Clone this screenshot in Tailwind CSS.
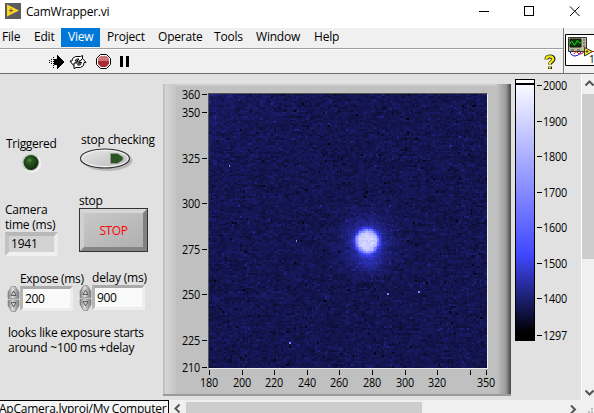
<!DOCTYPE html>
<html lang="en">
<head>
    <meta charset="UTF-8">
    <meta name="viewport" content="width=device-width, initial-scale=1.0">
    <title>CamWrapper.vi</title>
    <script src="https://cdn.jsdelivr.net/npm/@tailwindcss/browser@4"></script>
</head>
<body class="w-[594px] h-[413px] overflow-hidden flex flex-col bg-[#e1e1e1] text-black text-[12px] leading-[15px] tracking-[-0.2px] font-['Open_Sans',sans-serif] whitespace-nowrap">
    <!-- Title bar -->
    <header class="h-7 shrink-0 bg-white flex items-start">
        <svg class="ml-[5px] mt-[3px]" width="16" height="16" viewBox="0 0 16 16">
            <rect width="16" height="16" fill="#5b5e61"/>
            <path d="M2 1.5 14 7.5 2 13.5z" fill="#ffd51e"/>
            <path d="M4 7.5h4M6 5.5v4" stroke="#5b5e61" stroke-width="1"/>
        </svg>
        <span class="ml-[5px] mt-1 tracking-[-0.25px]">CamWrapper.vi</span>
        <svg class="ml-auto mr-[13px] mt-[5px]" width="103" height="12" viewBox="0 0 103 12" fill="none" stroke="#000">
            <path d="M1 6.5h10M46.500 1.500h9v9h-9z" shape-rendering="crispEdges"/>
            <path d="M92 1.500 101.500 11M101.500 1.500 92 11"/>
        </svg>
    </header>

    <div class="h-[46px] shrink-0 flex bg-[#f0f0f0] border-b border-[#6d6d6d]">
        <div class="w-[563px]">
            <nav class="h-[21px] flex border-b border-[#a0a0a0] leading-[18px]">
                <span class="w-[28px] pl-[2px]">File</span>
                <span class="w-[33px] pl-[6px]">Edit</span>
                <span class="w-[39px] h-[19px] pl-[7px] bg-[#0078d7] text-white">View</span>
                <span class="w-[51px] pl-[7px]">Project</span>
                <span class="w-[56px] pl-[7px]">Operate</span>
                <span class="w-[42px] pl-[7px]">Tools</span>
                <span class="w-[58px] pl-[7px]">Window</span>
                <span class="pl-[7px]">Help</span>
            </nav>
            <!-- Run controls -->
            <div class="h-6 flex items-center border-t border-white pl-[48px]">
                <svg width="84" height="18" viewBox="48 53 84 18">
                    <g shape-rendering="crispEdges">
                        <path d="M49.500 60v4M51.500 59v6M53.500 57v11" stroke="#000" stroke-dasharray="1 1"/>
                        <path d="M54 59h3v-4l7 7-7 7v-4h-3z" fill="#000"/>
                    </g>
                    <g fill="#fff" stroke="#000" stroke-width="1" stroke-linejoin="round">
                        <path d="M72 61 72.500 58.500 75.500 56.500H80.500L82.500 55.500V61H77L79 59H76.500L75 61H77.500L73.500 65.500 70 61z"/>
                        <path d="M84 62.500 83.500 65.500 80.500 67.500H76L74 68.500V63H79.500L77.500 65H80L81.500 62.500H79L82.500 58.500 86 62.500z"/>
                    </g>
                    <path d="M100.500 54.500h6l4 4v6l-4 4h-6l-4-4v-6z" fill="#fff" stroke="#000"/>
                    <path d="M101 56h5l3 3v5l-3 3h-5l-3-3v-5z" fill="#a82c32"/>
                    <path d="M101 56h5l3 3v2h-11v-2z" fill="#d07478"/>
                    <path d="M120 56h3v11h-3zM126 56h3v11h-3z" fill="#000" shape-rendering="crispEdges"/>
                </svg>
                <svg class="ml-auto mr-[7px]" width="12" height="16" viewBox="0 0 12 16" fill="none">
                    <path d="M2.500 5.500C2.500 1.500 9.500 1.500 9.500 5C9.500 7.500 6 7.500 6 10.500M6 12.500V15" stroke="#222" stroke-width="4"/>
                    <path d="M2.300 5.500C2.300 1.500 9.200 1.500 9.200 5C9.200 7.500 5.700 7.500 5.700 10.500M5.700 12.500V14.500" stroke="#f5e800" stroke-width="2.200"/>
                </svg>
            </div>
        </div>
        <div class="flex-1 border-l border-[#7a7a7a] pl-px pt-[6px]">
            <svg width="29" height="32" viewBox="0 0 29 32">
                <path d="M29 .5H.5v31H29" fill="#fff" stroke="#000"/>
                <path d="M3.500 3.500h18v14h-18z" fill="#bdbb9c" stroke="#333"/>
                <path d="M5 5h11v8H5z" fill="#063806" stroke="#111"/>
                <path d="M5 10q1.500-5 3-1t3 0 2-2 3 2" fill="none" stroke="#19e219"/>
                <path d="M18 6h2M18 9h2M18 12h2M6 16h3M12 16h3" stroke="#444"/>
                <path d="M5 17q1 5 5 5t6-4" fill="none" stroke="#1010c8"/>
                <path d="M9 20q2-4 4-1t7-2M26 17.500h3" fill="none" stroke="#e01010"/>
                <path d="M19.500 13.500 27.500 17.500 19.500 22z" fill="#f7ea1c" stroke="#333"/>
                <path d="M20.500 17.500h3M22 16v3" stroke="#333" stroke-width=".8"/>
                <text x="24" y="29" font-size="10">1</text>
            </svg>
        </div>
    </div>

    <!-- Front panel -->
    <main class="h-[326px] shrink-0 flex">
        <section class="w-[163px] pl-[5px] pt-[59px]">
            <div class="flex">
                <div class="w-[74px] pl-px pt-[3px]">
                    <span class="tracking-[-0.3px]">Triggered</span>
                    <svg class="ml-[14px] mt-px" width="22" height="22" viewBox="0 0 22 22">
                        <defs>
                            <radialGradient id="led" cx=".4" cy=".35" r=".65">
                                <stop offset="0" stop-color="#5a8a50"/>
                                <stop offset=".3" stop-color="#28571e"/>
                                <stop offset="1" stop-color="#0f2c0b"/>
                            </radialGradient>
                        </defs>
                        <circle cx="11.500" cy="11.500" r="9.500" fill="#f4f4f4"/>
                        <circle cx="10.500" cy="10.500" r="9" fill="#cdcdcd"/>
                        <circle cx="11" cy="10.500" r="7.500" fill="url(#led)"/>
                    </svg>
                </div>
                <div class="pl-[2px] -mt-px">
                    stop checking
                    <svg class="-ml-[2px]" width="56" height="26" viewBox="0 0 56 26">
                        <defs>
                            <linearGradient id="oval" x1="0" y1="0" x2="1" y2="1">
                                <stop offset="0" stop-color="#e9e9e9"/>
                                <stop offset="1" stop-color="#b9b9b9"/>
                            </linearGradient>
                        </defs>
                        <ellipse cx="28.500" cy="13.500" rx="25" ry="10.500" fill="#b9b9b9"/>
                        <ellipse cx="26" cy="11.500" rx="24.500" ry="9.500" fill="url(#oval)" stroke="#333" stroke-width="1.200"/>
                        <ellipse cx="26" cy="11.500" rx="23" ry="8" fill="none" stroke="#f5f5f5"/>
                        <path d="M31.500 6.500h7l5.500 3.500v3l-5.500 3.500h-7z" fill="#2c5422" stroke="#8a9a85"/>
                    </svg>
                </div>
            </div>
            <div class="flex mt-[19px]">
                <div class="w-[74px] pt-[9px]">
                    Camera<br>time (ms)
                    <div class="w-[53px] h-6 pl-[2px] pb-px bg-[#d2d2d2] border-4 border-t-[#b8b8b8] border-l-[#c2c2c2] border-r-[#ebebeb] border-b-[#f0f0f0] flex items-center">1941</div>
                </div>
                <div>
                    stop
                    <button class="block w-[69px] h-[44px] border border-[#333] text-[#ff0000] tracking-[-0.4px]">
                        <span class="flex items-center justify-center h-full border-4 border-t-[#d6d6d6] border-l-[#d0d0d0] border-r-[#808080] border-b-[#858585] bg-linear-to-br from-[#c8c8c8] to-[#b0b0b0]">STOP</span>
                    </button>
                </div>
            </div>
            <div class="flex mt-[14px] pl-[2px]">
                <div class="w-[72px] pt-px">
                    <div class="pl-[13px] tracking-[-0.3px]">Expose (ms)</div>
                    <div class="flex">
                        <svg width="13" height="26" viewBox="0 0 13 26">
                            <defs>
                                <linearGradient id="spin">
                                    <stop offset="0" stop-color="#777"/>
                                    <stop offset=".4" stop-color="#ddd"/>
                                    <stop offset="1" stop-color="#777"/>
                                </linearGradient>
                            </defs>
                            <path id="spinner" d="M1 12.500V6L4.500.5h4L12 6v6.500zM1 14h11v5.500l-3.500 6h-4L1 19.500z" fill="url(#spin)" stroke="#8a8a8a" stroke-width=".7"/>
                            <path id="arrows" d="M4 9.500 6.500 5 9 9.500zM4 16.500h5L6.500 21z" fill="#ccc" stroke="#444" stroke-width=".8"/>
                        </svg>
                        <div class="w-[53px] h-[25px] bg-[#fafafa] border-[3px] border-t-[#aaa] border-l-[#b4b4b4] border-r-[#eee] border-b-[#eee] pl-[2px] pt-[2px] tracking-[-0.4px]">200</div>
                    </div>
                </div>
                <div>
                    <div class="pl-[13px]">delay (ms)</div>
                    <div class="flex">
                        <svg width="13" height="26" viewBox="0 0 13 26">
                            <use href="#spinner"/>
                            <use href="#arrows"/>
                        </svg>
                        <div class="w-[53px] h-[25px] bg-[#fafafa] border-[3px] border-t-[#aaa] border-l-[#b4b4b4] border-r-[#eee] border-b-[#eee] pl-[2px] pt-[2px] tracking-[-0.4px]">900</div>
                    </div>
                </div>
            </div>
            <p class="mt-[13px] pl-[3px] tracking-[-0.23px]">looks like exposure starts<br>around ~100 ms +delay</p>
        </section>

        <!-- Intensity graph -->
        <section class="w-[348px] h-[312px] mt-[10px] flex bg-[#c0c0c0] border-b-2 border-[#9a9a9a]">
            <div class="w-[13px] bg-linear-to-r from-[#bdbdbd] from-5% via-[#d4d4d4] via-20% to-[#c6c6c6]"></div>
            <div class="w-[321px] flex flex-col border-t-2 border-[#cecece]">
                <div class="flex">
                    <svg class="shrink-0" id="yAxis" width="32" height="290" viewBox="0 0 32 290" font-size="12"></svg>
                    <canvas class="mt-[7px] w-[280px] h-[276px] border-t border-l border-t-[#555] border-l-[#555] border-b border-b-[#eee] border-r border-r-[#eee] [image-rendering:pixelated]" id="intensity" width="170" height="150"></canvas>
                </div>
                <svg class="-mt-[6px] shrink-0" id="xAxis" width="321" height="24" viewBox="0 0 321 24" font-size="12"></svg>
            </div>
            <div class="w-[14px] bg-linear-to-r from-[#c0c0c0] via-[#999] via-65% to-[#444]"></div>
        </section>

        <!-- Colour ramp -->
        <section class="w-[70px] pl-1 pt-[5px]">
            <svg id="ramp" width="66" height="270" viewBox="515 79 66 270" font-size="12">
                <defs>
                    <linearGradient id="rampFill" x1="0" y1="0" x2="0" y2="1">
                        <stop offset="0" stop-color="#fff"/>
                        <stop offset=".67" stop-color="#4048ff"/>
                        <stop offset=".97" stop-color="#000"/>
                    </linearGradient>
                </defs>
                <rect x="515.500" y="79.500" width="19" height="261" fill="url(#rampFill)" stroke="#000"/>
                <path d="M515 84h20" stroke="#000" stroke-width="2"/>
            </svg>
        </section>

        <!-- Vertical scrollbar -->
        <aside class="w-[13px] bg-[#f0f0f0] border-l border-white">
            <svg width="12" height="20" viewBox="0 0 12 20" fill="none" stroke="#555" stroke-width="2"><path d="M3.500 11.500 7.500 7.500 11.500 11.500"/></svg>
            <div class="h-[165px] bg-[#cdcdcd]"></div>
            <svg class="mt-[122px]" width="12" height="18" viewBox="0 0 12 18" fill="none" stroke="#555" stroke-width="2"><path d="M3.500 9.500 7.500 13.500 11.500 9.500"/></svg>
        </aside>
    </main>

    <!-- Project path and horizontal scrollbar -->
    <footer class="h-[13px] shrink-0 flex bg-[#f0f0f0]">
        <div class="w-[169px] border-t border-r border-black bg-[#f5f5f5] overflow-hidden leading-[16px] tracking-[-0.25px]">
            <span class="-ml-px">ApCamera.lvproj/My Computer</span>
        </div>
        <svg width="17" height="13" viewBox="0 0 17 13" fill="none" stroke="#555" stroke-width="2"><path d="M10.500 4.500 6.500 8.500 10.500 12.500"/></svg>
        <div class="w-[236px] mt-[2px] bg-[#cdcdcd]"></div>
        <svg class="ml-auto" width="24" height="13" viewBox="570 400 24 13" fill="none" stroke="#555" stroke-width="2">
            <path d="M571 405.500 575 409.500 571 413.500"/>
            <path d="M591 409h2M588 412h2M591 412h2" stroke="#bbb"/>
        </svg>
    </footer>

    <script>
        const NS = 'http://www.w3.org/2000/svg';

        function add(parent, tag, attrs, text) {
            const el = document.createElementNS(NS, tag);
            for (const key in attrs) el.setAttribute(key, attrs[key]);
            if (text !== undefined) el.textContent = text;
            parent.appendChild(el);
        }

        const yAxis = document.getElementById('yAxis');
        [[360, 8], [350, 26], [325, 72], [300, 117], [275, 163], [250, 208], [225, 254], [210, 281]].forEach(([value, y]) => {
            add(yAxis, 'text', { x: 6, y: y + 5, textLength: 18, lengthAdjust: 'spacingAndGlyphs' }, value);
            add(yAxis, 'path', { d: `M26 ${y + 0.5}h5`, stroke: '#000' });
        });

        const xAxis = document.getElementById('xAxis');
        [180, 200, 220, 240, 260, 280, 300, 320, 340, 350].forEach((value) => {
            const x = Math.round(33 + (value - 180) * 1.63);
            add(xAxis, 'path', { d: `M${x + 0.5} 0v5`, stroke: '#000' });
            if (value !== 340) add(xAxis, 'text', { x: x - 9, y: 17, textLength: 18, lengthAdjust: 'spacingAndGlyphs' }, value);
        });

        const ramp = document.getElementById('ramp');
        [[2000, 85], [1900, 121], [1800, 156], [1700, 192], [1600, 227], [1500, 263], [1400, 298], [1297, 335]].forEach(([value, y]) => {
            add(ramp, 'path', { d: `M537 ${y + 0.5}h5`, stroke: '#000' });
            add(ramp, 'text', { x: 543, y: y + 5, textLength: 24, lengthAdjust: 'spacingAndGlyphs' }, value);
        });

        // Camera frame: dark noise with one bright spot and its halo
        let seed = 1941;
        function rand() {
            seed = (seed * 1664525 + 1013904223) % 4294967296;
            return seed / 4294967296;
        }

        const ctx = document.getElementById('intensity').getContext('2d');
        const frame = ctx.createImageData(170, 150);
        let previous = 0;
        for (let y = 0; y < 150; y++) {
            for (let x = 0; x < 170; x++) {
                const r = Math.hypot((x - 96.2) * 1.64, (y - 80) * 1.83);
                const tail = Math.hypot((x - 98) * 1.64, (y - 91) * 1.83);
                const noise = (rand() + rand() + rand() - 1.5) * 0.09 + previous * 0.35;
                previous = noise;
                let v = 0.31 + noise;
                const odd = rand();
                if (odd < 0.01) v -= 0.22;
                if (odd > 0.985) v += 0.16;
                v += 0.09 * Math.exp(-Math.hypot(x, y) / 25);
                v += 0.4 * Math.exp(-r * r / 500) + 0.22 * Math.exp(-tail * tail / 150);
                v += 1.1 / (1 + Math.exp((r - 11.8) / 1.5));
                v = Math.max(0.04, Math.min(v, 1.68 + rand() * 0.16));
                const i = (y * 170 + x) * 4;
                if (v < 1) {
                    frame.data[i] = 62 * v;
                    frame.data[i + 1] = 68 * v;
                    frame.data[i + 2] = 255 * v;
                } else {
                    frame.data[i] = 64 + 191 * (v - 1);
                    frame.data[i + 1] = 72 + 183 * (v - 1);
                    frame.data[i + 2] = 255;
                }
                frame.data[i + 3] = 255;
            }
        }
        // Hot pixels
        [[12, 39], [49, 136], [53, 80], [128, 108], [109, 109]].forEach(([x, y]) => {
            frame.data.set([124, 134, 255, 255], (y * 170 + x) * 4);
        });
        ctx.putImageData(frame, 0, 0);
    </script>
</body>
</html>
